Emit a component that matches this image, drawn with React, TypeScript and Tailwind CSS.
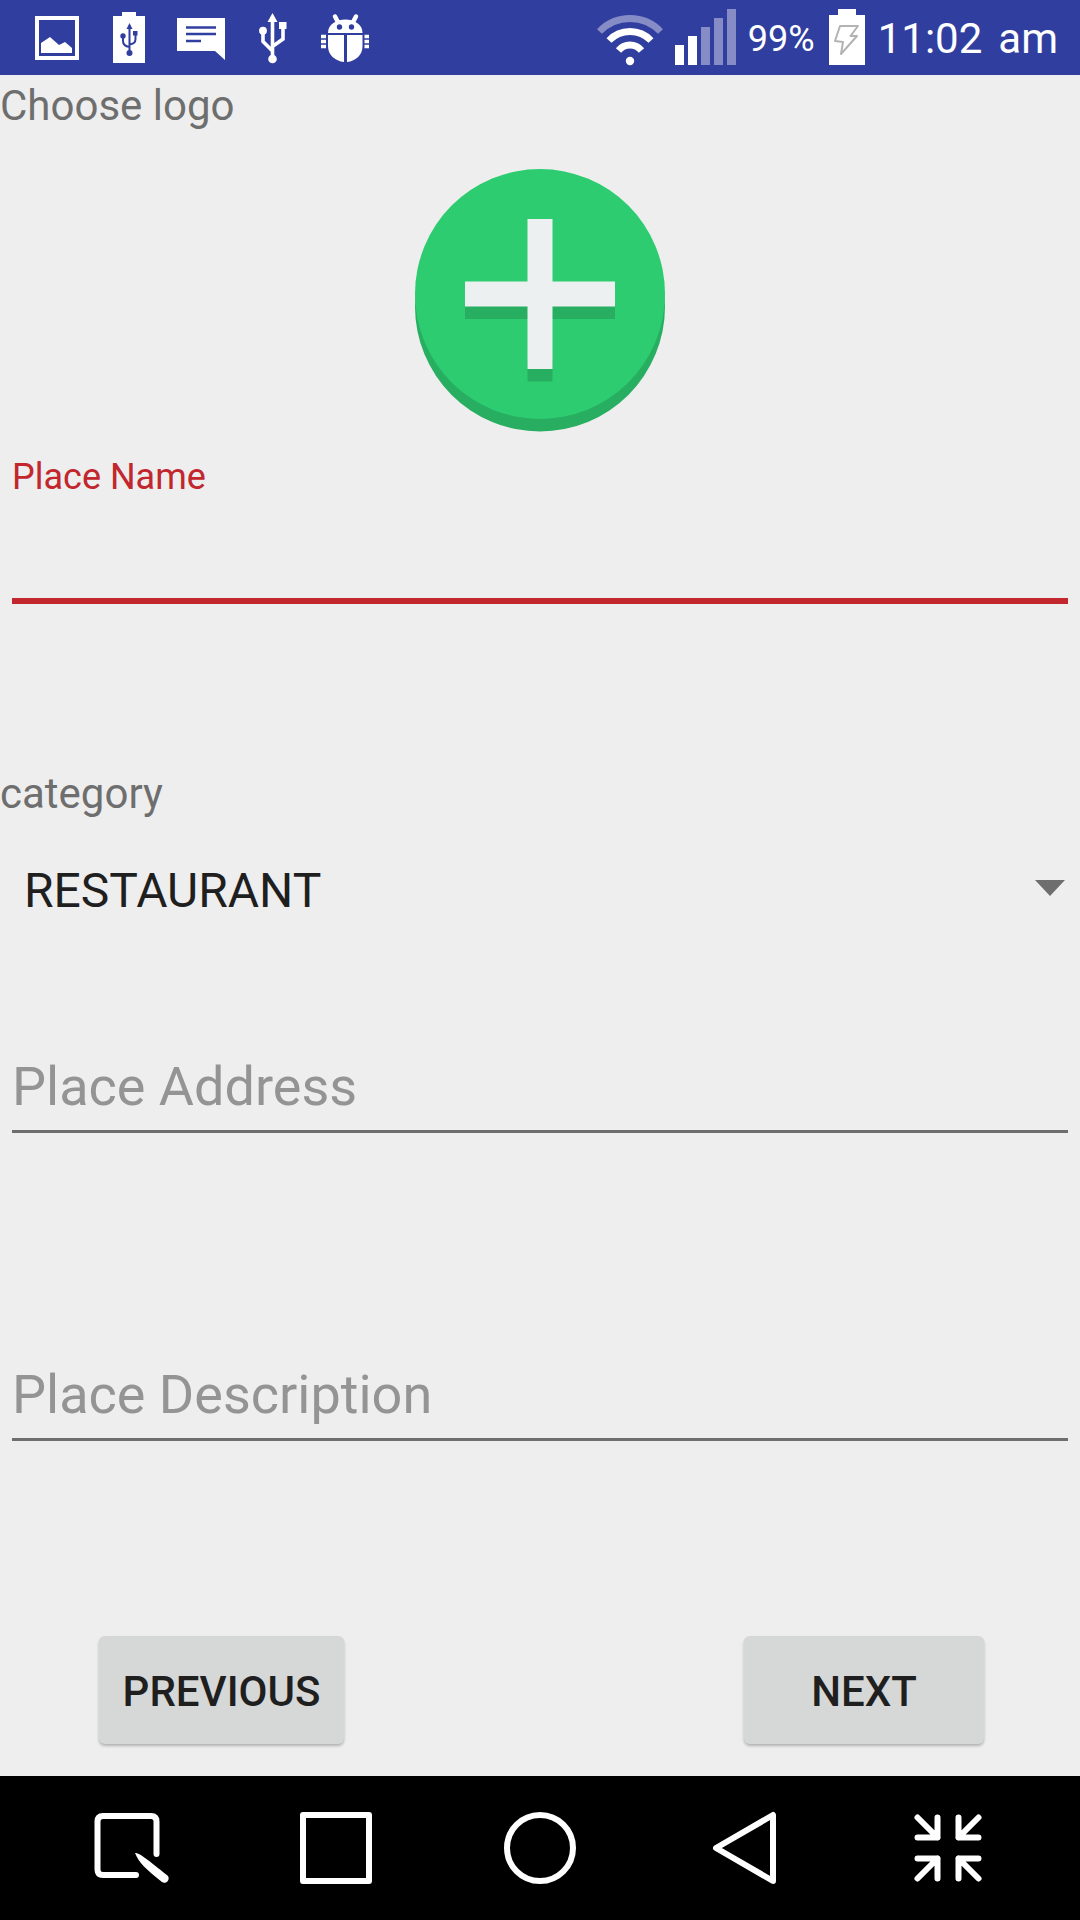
import React, { useState } from "react";

function StatusBar() {
  return (
    <header className="flex h-[75px] items-start justify-between bg-[#303F9F] pl-[33px] pr-[22px] text-white">
      <div className="flex gap-6 pt-[13px]">
        <svg className="size-12 overflow-visible" viewBox="0 0 48 48" aria-label="Picture saved">
          <rect x="4" y="5" width="40" height="40" fill="none" stroke="currentColor" strokeWidth="4" />
          <path d="M8 40V30L17 24L26 32L32 29L39 35V40Z" fill="currentColor" />
        </svg>
        <svg className="size-12 overflow-visible" viewBox="0 0 48 48" aria-label="Charging over USB">
          <path d="M8 3H17V-1H31V3H40V50H8Z" fill="currentColor" />
          <g fill="#303F9F" stroke="none">
            <path d="M24.5 10L27.5 16H21.5Z" />
            <circle cx="24.5" cy="40" r="3" />
            <circle cx="18" cy="23" r="2.7" />
            <rect x="28" y="18" width="4.5" height="4.5" />
          </g>
          <path d="M24.5 14V39M18 24V28Q18 33 24.5 34M30.5 22V26Q30.5 31 24.5 31.5" fill="none" stroke="#303F9F" strokeWidth="2" />
        </svg>
        <svg className="size-12 overflow-visible" viewBox="0 0 48 48" aria-label="Message">
          <path d="M0 5H48V47L38 38H0Z" fill="currentColor" />
          <path d="M9 14.5H39M9 21H39M9 28H24" stroke="#303F9F" strokeWidth="2.5" />
        </svg>
        <svg className="size-12 overflow-visible" viewBox="0 0 48 48" aria-label="USB">
          <g fill="currentColor">
            <path d="M23.5 0L28.5 9H18.5Z" />
            <circle cx="23.5" cy="46" r="4.3" />
            <circle cx="14" cy="17.7" r="3.9" />
            <rect x="30" y="9" width="7.5" height="7" />
          </g>
          <path d="M23.5 8V45M14 18V28.5L23.5 38M34 16V26L23.5 33.5" fill="none" stroke="currentColor" strokeWidth="3.6" />
        </svg>
        <svg className="size-12 overflow-visible" viewBox="0 0 48 48" aria-label="Debugging">
          <path d="M14 3.5L17.5 10M35 3.5L31.5 10" stroke="currentColor" strokeWidth="4.5" strokeLinecap="round" />
          <path d="M7 20C7 2 41.5 2 41.5 20Z" fill="currentColor" />
          <path d="M7 22H23V49C14 48 7 42 7 33ZM26 22H41.5V33C41.5 42 35 48 26 49Z" fill="currentColor" />
          <circle cx="18.5" cy="14" r="2.7" fill="#303F9F" />
          <circle cx="30.5" cy="14" r="2.7" fill="#303F9F" />
          <path d="M0 23.5H5M0 28.5H5M0 33.5H5M43.5 23.5H48M43.5 28.5H48M43.5 33.5H48" stroke="currentColor" strokeWidth="3.5" />
        </svg>
      </div>
      <div className="flex items-start">
        <svg className="h-[75px] w-[66px]" viewBox="597 0 66 75" aria-label="Wi-Fi">
          <g fill="none" stroke="currentColor" strokeWidth="6.8">
            <path d="M599.5 31.5A42.3 42.3 0 0 1 660.5 31.5" stroke="#868CC5" />
            <path d="M609 40.5A29 29 0 0 1 651 40.5" />
            <path d="M618.5 50.5A14.8 14.8 0 0 1 641.5 50.5" />
          </g>
          <circle cx="630" cy="61" r="4.2" fill="currentColor" />
        </svg>
        <svg className="ml-3 h-[75px] w-[61px]" viewBox="0 0 61 75" aria-label="Signal">
          <path d="M0 45H9V65H0ZM13 36H22V65H13Z" fill="currentColor" />
          <path d="M26 27H35V65H26ZM39 18H48V65H39ZM52 9H61V65H52Z" fill="#868CC5" />
        </svg>
        <span className="ml-3 w-[68px] text-[36px] leading-[78px]">99%</span>
        <svg className="ml-[13px] h-[75px] w-9" viewBox="829 0 36 75" aria-label="Battery charging">
          <path d="M829 15H838V9H856V15H865V65H829Z" fill="currentColor" />
          <path d="M840 26H858L850.5 36H857L841 54L843 42L835 41Z" fill="none" stroke="#B3B3B3" strokeWidth="2" strokeLinejoin="round" />
        </svg>
        <time className="ml-[13px] flex gap-4 text-[42px] leading-[78px]">
          <span>11:02</span>
          <span>am</span>
        </time>
      </div>
    </header>
  );
}

function NavButton({ label, children }: { label: string; children: React.ReactNode }) {
  return (
    <button type="button" aria-label={label} className="flex items-center justify-center">
      <svg
        className="size-[76px]"
        viewBox="0 0 76 76"
        fill="none"
        stroke="currentColor"
        strokeWidth="6"
        strokeLinecap="round"
        strokeLinejoin="round"
      >
        {children}
      </svg>
    </button>
  );
}

function NavBar() {
  return (
    <nav className="grid h-36 grid-cols-5 bg-black px-[30px] text-white">
      <NavButton label="Capture note">
        <path d="M42 65H9Q3.5 65 3.5 59.5V11.5Q3.5 6 9 6H57Q62.5 6 62.5 11.5V44" />
        <path d="M41 43C46 43 54 50 73.5 65.5C77 69 72 75 68 72C52 59 45 53 41 43Z" fill="currentColor" stroke="none" />
      </NavButton>
      <NavButton label="Recent apps">
        <rect x="5" y="5" width="66" height="66" />
      </NavButton>
      <NavButton label="Home">
        <circle cx="38" cy="38" r="33" />
      </NavButton>
      <NavButton label="Back">
        <path d="M67 5V71L10 38Z" />
      </NavButton>
      <NavButton label="Exit full screen">
        <path d="M7.5 7.5L27.5 27.5M27.5 7.5V27.5H7.5M68.5 7.5L48.5 27.5M48.5 7.5V27.5H68.5M7.5 68.5L27.5 48.5M27.5 68.5V48.5H7.5M68.5 68.5L48.5 48.5M48.5 68.5V48.5H68.5" />
      </NavButton>
    </nav>
  );
}

export default function App() {
  const [name, setName] = useState("");
  const [address, setAddress] = useState("");
  const [description, setDescription] = useState("");

  return (
    <div className="flex min-h-screen flex-col bg-[#EEEEEE] font-['Roboto',sans-serif] text-[#1F1F1F]">
      <StatusBar />
      <form className="flex flex-1 flex-col" onSubmit={(e) => e.preventDefault()}>
        <span id="logo-label" className="text-[42px] leading-[62px] text-[#6E6E6E]">
          Choose logo
        </span>
        <button type="button" aria-labelledby="logo-label" className="mt-8 self-center">
          <svg className="h-[263px] w-[250px]" viewBox="0 0 250 263">
            <circle cx="125" cy="137.5" r="125" fill="#27AE60" />
            <circle cx="125" cy="125" r="125" fill="#2ECC71" />
            <path d="M50 125H200V150H50ZM112.5 190H137.5V212.5H112.5Z" fill="#27AE60" />
            <path d="M112.5 50H137.5V112.5H200V137.5H137.5V200H112.5V137.5H50V112.5H112.5Z" fill="#ECF0F1" />
          </svg>
        </button>

        <div className="mx-3 mt-[23px] flex flex-col">
          <label htmlFor="place-name" className="text-[36px] leading-[44px] text-[#C1272D]">
            Place Name
          </label>
          <input
            id="place-name"
            value={name}
            onChange={(e) => setName(e.target.value)}
            className="h-[105px] w-full border-b-6 border-[#C1272D] text-[54px] outline-none"
          />
        </div>

        <label htmlFor="category" className="mt-[159px] text-[42px] leading-[62px] text-[#6E6E6E]">
          category
        </label>
        <div className="relative mt-[18px]">
          <select id="category" className="h-24 w-full appearance-none pl-6 text-[48px] outline-none">
            <option>RESTAURANT</option>
          </select>
          <svg className="pointer-events-none absolute right-[15px] top-[37px] h-4 w-[30px]" viewBox="0 0 30 16">
            <path d="M0 0H30L15 16Z" fill="#6E6E6E" />
          </svg>
        </div>

        <div className="mx-3 mt-[104px] flex">
          <input
            aria-label="Place Address"
            placeholder="Place Address"
            value={address}
            onChange={(e) => setAddress(e.target.value)}
            className="h-[90px] w-full border-b-3 border-[#6E6E6E] text-[54px] outline-none placeholder:text-[#949494]"
          />
        </div>
        <div className="mx-3 mt-[218px] flex">
          <input
            aria-label="Place Description"
            placeholder="Place Description"
            value={description}
            onChange={(e) => setDescription(e.target.value)}
            className="h-[90px] w-full border-b-3 border-[#6E6E6E] text-[54px] outline-none placeholder:text-[#949494]"
          />
        </div>

        <div className="mb-8 mt-auto flex justify-between pl-[99px] pr-24 pt-8">
          <button
            type="button"
            className="h-[108px] w-[245px] rounded-md bg-[#D6D7D7] pt-0.5 text-[42px] font-medium shadow-[0_2px_3px_rgba(0,0,0,0.25)]"
          >
            PREVIOUS
          </button>
          <button
            type="submit"
            className="h-[108px] w-60 rounded-md bg-[#D6D7D7] pt-0.5 text-[42px] font-medium shadow-[0_2px_3px_rgba(0,0,0,0.25)]"
          >
            NEXT
          </button>
        </div>
      </form>
      <NavBar />
    </div>
  );
}
